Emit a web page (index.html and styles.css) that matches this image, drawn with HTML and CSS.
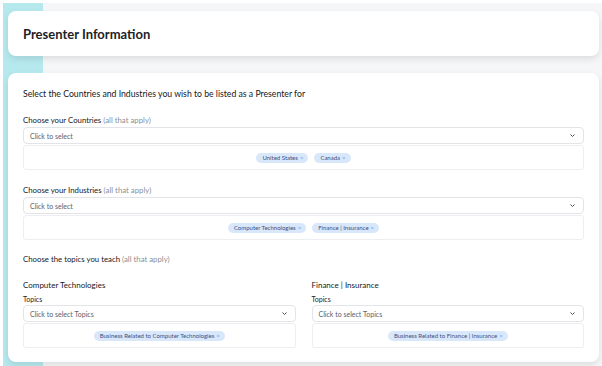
FILE: index.html
```html
<!DOCTYPE html>
<html lang="en">
  <head>
    <meta charset="UTF-8" />
    <meta name="viewport" content="width=device-width, initial-scale=1.0" />
    <title>Presenter Information</title>
    <link rel="stylesheet" href="styles.css">
  </head>
  <body>
    <div id="page">
      <div class="card header-card">
        <h1>Presenter Information</h1>
      </div>

      <div class="card form-card">
        <p class="intro">Select the Countries and Industries you wish to be listed as a Presenter for</p>

        <div class="field">
          <label class="label">Choose your Countries <span class="muted">(all that apply)</span></label>
          <div class="select">
            <span>Click to select</span>
            <svg class="chevron" viewBox="0 0 10 6"><path d="M1 1l4 4 4-4" /></svg>
          </div>
          <div class="tags">
            <span class="tag">United States <b>×</b></span>
            <span class="tag">Canada <b>×</b></span>
          </div>
        </div>

        <div class="field">
          <label class="label">Choose your Industries <span class="muted">(all that apply)</span></label>
          <div class="select">
            <span>Click to select</span>
            <svg class="chevron" viewBox="0 0 10 6"><path d="M1 1l4 4 4-4" /></svg>
          </div>
          <div class="tags">
            <span class="tag">Computer Technologies <b>×</b></span>
            <span class="tag">Finance | Insurance <b>×</b></span>
          </div>
        </div>

        <p class="label topics-title">Choose the topics you teach <span class="muted">(all that apply)</span></p>

        <div class="columns">
          <div class="column">
            <h3>Computer Technologies</h3>
            <div class="small-label">Topics</div>
            <div class="select">
              <span>Click to select Topics</span>
              <svg class="chevron" viewBox="0 0 10 6"><path d="M1 1l4 4 4-4" /></svg>
            </div>
            <div class="tags">
              <span class="tag">Business Related to Computer Technologies <b>×</b></span>
            </div>
          </div>
          <div class="column">
            <h3>Finance | Insurance</h3>
            <div class="small-label">Topics</div>
            <div class="select">
              <span>Click to select Topics</span>
              <svg class="chevron" viewBox="0 0 10 6"><path d="M1 1l4 4 4-4" /></svg>
            </div>
            <div class="tags">
              <span class="tag">Business Related to Finance | Insurance <b>×</b></span>
            </div>
          </div>
        </div>
      </div>
    </div>
  </body>
</html>
```

FILE: styles.css
```css
* {
  margin: 0;
  padding: 0;
  box-sizing: border-box;
}

html,
body {
  height: 100%;
  overflow: hidden;
}

body {
  font-family: "Lato", "Noto Sans", Arial, sans-serif;
  color: #1e2227;
  background-color: #ffffff;
}

#page {
  height: 100%;
  margin-top: 3px;
  padding: 8px 3px 0 8px;
  background: linear-gradient(to right, #ffffff 0, #ffffff 3px, #b6e9ee 3px, #b6e9ee 43px, #f5f6f8 43px);
}

.card {
  background-color: #ffffff;
  border-radius: 8px;
  box-shadow: 0 3px 7px rgba(0, 0, 0, 0.1);
}

.header-card {
  height: 45px;
  padding: 0 15px;
  display: flex;
  align-items: center;
}

.header-card h1 {
  font-size: 13px;
  font-weight: 700;
  padding-top: 1px;
}

.form-card {
  margin-top: 17px;
  height: 289px;
  padding: 15px 15px 0 15px;
}

.intro {
  font-size: 8.7px;
  margin-top: 0;
  line-height: 12px;
  color: #15181c;
}

.field {
  margin-top: 15px;
}

.field + .field {
  margin-top: 15px;
}

.label {
  display: block;
  font-size: 7.8px;
  line-height: 10px;
  margin-top: 1px;
  margin-bottom: 2px;
  color: #15181c;
}

.muted {
  color: #8b9098;
}

.select {
  height: 17px;
  border: 1px solid #e2e4e8;
  border-radius: 4px;
  display: flex;
  align-items: center;
  justify-content: space-between;
  padding: 0 8px 0 6px;
  font-size: 7px;
  color: #5b616b;
}

.chevron {
  width: 5px;
  height: 3px;
  fill: none;
  stroke: #4a4e56;
  stroke-width: 2;
}

.tags {
  height: 25px;
  margin-top: 1px;
  border: 1px solid #eceef1;
  border-radius: 3px;
  display: flex;
  justify-content: center;
  align-items: center;
  gap: 6px;
}

.tag {
  height: 10px;
  padding: 0 5px 0 6px;
  border-radius: 5px;
  background-color: #d9e7fb;
  color: #3d4f80;
  font-size: 6px;
  display: flex;
  align-items: center;
  gap: 2px;
}

.tag b {
  color: #57a8f2;
  font-weight: 400;
}

.topics-title {
  margin-top: 14px;
}

.columns {
  margin-top: 16px;
  display: grid;
  grid-template-columns: 1fr 1fr;
  gap: 16px;
}

.column h3 {
  font-size: 8px;
  font-weight: 400;
  line-height: 10px;
  color: #15181c;
}

.small-label {
  font-size: 7px;
  line-height: 8px;
  margin-top: 5px;
  margin-bottom: 2px;
}
```
